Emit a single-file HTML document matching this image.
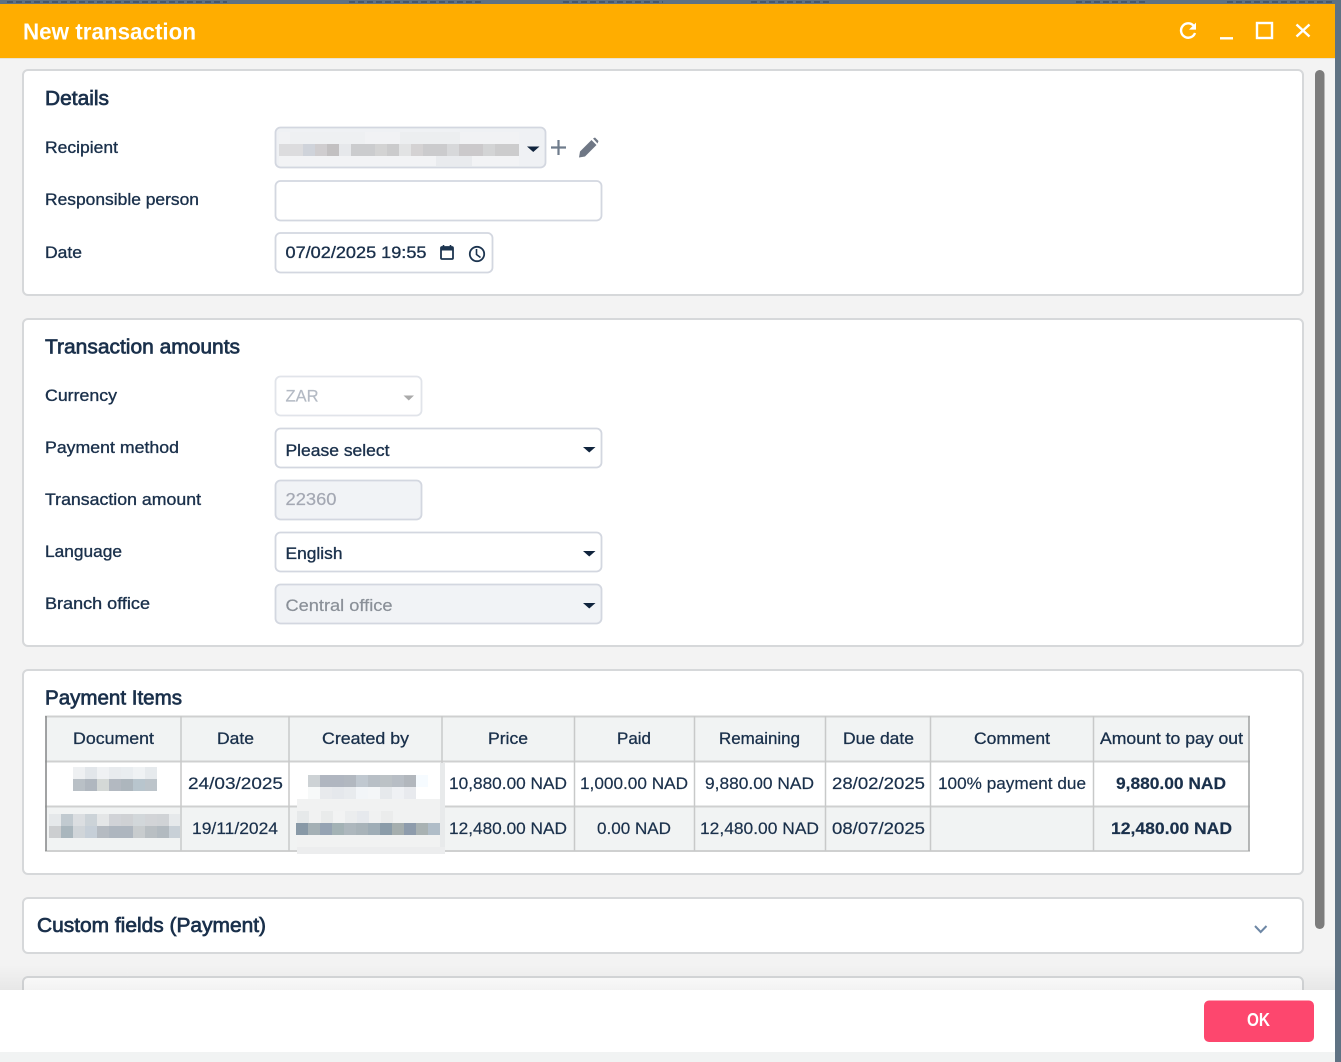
<!DOCTYPE html>
<html lang="en">
<head>
<meta charset="utf-8">
<title>New transaction</title>
<style>
html,body{margin:0;padding:0;background:#5f7283;width:1341px;height:1062px;overflow:hidden}
svg{display:block;position:absolute;left:0;top:0;filter:blur(.35px)}
text{font-family:"Liberation Sans",sans-serif;fill:#1a304b;font-size:17px;stroke:#1a304b;stroke-width:.2px}
.m{stroke:#1a304b;stroke-width:.35px}
.t{font-size:20px;stroke:#1a304b;stroke-width:.7px}
.th{font-size:17px;stroke:#1a304b;stroke-width:.3px}
.b{font-weight:bold;font-size:17px}
.card{fill:#fff;stroke:#d6d8da;stroke-width:2}
.in{fill:#fff;stroke:#d3d7e0;stroke-width:1.800}
.n{stroke:none}
</style>
</head>
<body>
<svg width="1341" height="1062" viewBox="0 0 1341 1062" xmlns="http://www.w3.org/2000/svg">
<defs>
<linearGradient id="fade" x1="0" y1="0" x2="0" y2="1"><stop offset="0" stop-color="#000" stop-opacity="0"/><stop offset="1" stop-color="#000" stop-opacity=".05"/></linearGradient>
</defs>

<!-- page behind -->
<rect x="0" y="0" width="1341" height="1062" fill="#5f7283"/>
<g stroke="#46576a" stroke-width="2" stroke-dasharray="6 3" fill="none">
<path d="M7 2H227M349 2H481M563 2H663M751 2H830M1076 2H1146M1227 2H1334"/>
</g>

<!-- modal -->
<rect x="0" y="4" width="1335" height="1048" fill="#f3f3f3"/>
<rect x="0" y="4" width="1335" height="54" fill="#ffad00"/>
<rect x="0" y="58" width="1335" height="1" fill="#e9e4d6"/>
<text class="n" x="23" y="39.500" textLength="173" lengthAdjust="spacingAndGlyphs" style="font-size:23px;font-weight:bold;fill:#fff;">New transaction</text>

<!-- header icons -->
<g fill="none" stroke="#fff" stroke-width="2.400">
<path d="M1193.500 25.600A7.200 7.200 0 1 0 1195 33"/>
<path d="M1196 22.600V29.600H1189Z" fill="#fff" stroke="none"/>
<path d="M1220 38.300H1233"/>
<rect x="1257" y="23" width="15" height="15"/>
<path d="M1296.500 24.500L1309.500 36.500M1309.500 24.500L1296.500 36.500"/>
</g>

<!-- scrollbar -->
<rect x="1315" y="70" width="9.500" height="859" rx="4.700" fill="#7c7c7c"/>

<!-- cards -->
<rect class="card" x="23" y="70" width="1280" height="225" rx="5"/>
<rect class="card" x="23" y="319" width="1280" height="327" rx="5"/>
<rect class="card" x="23" y="670" width="1280" height="204" rx="5"/>
<rect class="card" x="23" y="898" width="1280" height="55" rx="5"/>
<rect class="card" x="23" y="977" width="1280" height="40" rx="5"/>
<rect x="0" y="965" width="1335" height="25" fill="url(#fade)"/>

<!-- Details -->
<text class="t" x="45" y="105" textLength="64" lengthAdjust="spacingAndGlyphs">Details</text>
<text class="m" x="45" y="153" textLength="73" lengthAdjust="spacingAndGlyphs">Recipient</text>
<text class="m" x="45" y="205" textLength="154" lengthAdjust="spacingAndGlyphs">Responsible person</text>
<text class="m" x="45" y="258" textLength="37" lengthAdjust="spacingAndGlyphs">Date</text>

<rect class="in" x="275.500" y="127.500" width="270" height="40" rx="5" style="fill:#eff1f4"/>
<!-- recipient blur -->
<g>
<rect x="279" y="132" width="240" height="12" fill="#f1f2f4"/>
<rect x="290" y="132" width="75" height="12" fill="#eef0f2"/>
<rect x="400" y="132" width="60" height="12" fill="#eceef0"/>
<rect x="279" y="156" width="240" height="10" fill="#f2f3f5"/>
<rect x="436" y="156" width="36" height="10" fill="#e9ebee"/>
<rect x="279" y="144" width="24" height="12" fill="#dcdcde"/>
<rect x="303" y="144" width="12" height="12" fill="#cfd3da"/>
<rect x="315" y="144" width="12" height="12" fill="#cfcdcf"/>
<rect x="327" y="144" width="12" height="12" fill="#c2c0c1"/>
<rect x="339" y="144" width="12" height="12" fill="#e6e8eb"/>
<rect x="351" y="144" width="24" height="12" fill="#cbccce"/>
<rect x="375" y="144" width="12" height="12" fill="#d3d3d3"/>
<rect x="387" y="144" width="12" height="12" fill="#cbcbcc"/>
<rect x="399" y="144" width="12" height="12" fill="#e2e3e4"/>
<rect x="411" y="144" width="12" height="12" fill="#d4d2d3"/>
<rect x="423" y="144" width="24" height="12" fill="#cbcbcd"/>
<rect x="447" y="144" width="12" height="12" fill="#d7d8da"/>
<rect x="459" y="144" width="24" height="12" fill="#cbc9cb"/>
<rect x="483" y="144" width="12" height="12" fill="#d3d4d5"/>
<rect x="495" y="144" width="24" height="12" fill="#cccccd"/>
</g>
<path d="M527 146.500H539.500L533.250 152Z" fill="#10243d"/>
<path d="M558.500 140V155M551 147.500H566" stroke="#6f7c8c" stroke-width="2.200" fill="none"/>
<path d="M579 157.500L580 151.500L591.500 140L596.500 145L585 156.500Z M593 138.500L595 137.500L598.500 141L597.500 143.500Z" fill="#6f7785"/>

<rect class="in" x="275.500" y="181" width="326" height="39.500" rx="5"/>
<rect class="in" x="275.500" y="233" width="217" height="39.500" rx="5"/>
<text class="m" x="285.500" y="258" textLength="141" lengthAdjust="spacingAndGlyphs">07/02/2025 19:55</text>
<!-- calendar -->
<g fill="none" stroke="#1d3550">
<rect x="441" y="247" width="12" height="12" rx="1" stroke-width="1.800"/>
<rect x="441" y="246.500" width="12" height="4" fill="#1d3550" stroke="none"/>
<path d="M443.500 245V248M450.500 245V248" stroke-width="1.600"/>
<circle cx="477" cy="254" r="7.200" stroke-width="1.800"/>
<path d="M476.500 249V254.500L480.500 257.500" stroke-width="1.600"/>
</g>

<!-- Transaction amounts -->
<text class="t" x="45" y="353.500" textLength="195" lengthAdjust="spacingAndGlyphs">Transaction amounts</text>
<text class="m" x="45" y="401" textLength="72" lengthAdjust="spacingAndGlyphs">Currency</text>
<text class="m" x="45" y="453" textLength="134" lengthAdjust="spacingAndGlyphs">Payment method</text>
<text class="m" x="45" y="505" textLength="156" lengthAdjust="spacingAndGlyphs">Transaction amount</text>
<text class="m" x="45" y="557" textLength="77" lengthAdjust="spacingAndGlyphs">Language</text>
<text class="m" x="45" y="609" textLength="105" lengthAdjust="spacingAndGlyphs">Branch office</text>

<rect x="275.500" y="376.500" width="146" height="39" rx="5" fill="#fff" stroke="#e1e4ea" stroke-width="1.800"/>
<text x="285.500" y="401.500" textLength="33" lengthAdjust="spacingAndGlyphs" style="fill:#b4bac4;stroke:#b4bac4;font-size:17px">ZAR</text>
<path d="M403.500 395.500H414L408.750 400.500Z" fill="#aaaaaa"/>

<rect class="in" x="275.500" y="428.500" width="326" height="39" rx="5"/>
<text class="m" x="285.500" y="456" textLength="104" lengthAdjust="spacingAndGlyphs">Please select</text>
<path d="M583 447H595.500L589.250 452.500Z" fill="#10243d"/>

<rect class="in" x="275.500" y="480.500" width="146" height="39" rx="5" style="fill:#f1f3f6"/>
<text x="285.500" y="505" textLength="51" lengthAdjust="spacingAndGlyphs" style="fill:#a4a8b3;stroke:#a4a8b3;font-size:17.500px">22360</text>

<rect class="in" x="275.500" y="532.500" width="326" height="39" rx="5"/>
<text class="m" x="285.500" y="559" textLength="57" lengthAdjust="spacingAndGlyphs">English</text>
<path d="M583 551H595.500L589.250 556.500Z" fill="#10243d"/>

<rect class="in" x="275.500" y="584.500" width="326" height="39" rx="5" style="fill:#f1f3f6"/>
<text x="285.500" y="611" textLength="107" lengthAdjust="spacingAndGlyphs" style="fill:#8a9098;stroke:#8a9098">Central office</text>
<path d="M583 603H595.500L589.250 608.500Z" fill="#10243d"/>

<!-- Payment Items -->
<text class="t" x="45" y="704.500" textLength="137" lengthAdjust="spacingAndGlyphs">Payment Items</text>

<rect x="46" y="717" width="1203" height="44" fill="#f1f3f3"/>
<rect x="46" y="807" width="1203" height="44" fill="#f1f3f3"/>
<g stroke="#cfd0d0" stroke-width="2" fill="none">
<path d="M45 716.500H1250M45 761.500H1250M45 806.500H1250M45 851H1250"/>
</g>
<g stroke="#c8c9c9" stroke-width="1.500" fill="none">
<path d="M181 716V851M289 716V851M442 716V851M574.500 716V851M694.500 716V851M825.500 716V851M930.500 716V851M1093.500 716V851"/>
</g>
<path d="M46 716V851" stroke="#8a8c8d" stroke-width="1.600"/>
<path d="M1249 716V851" stroke="#a4a6a6" stroke-width="1.600"/>

<g>
<text class="th" x="73" y="744" textLength="81" lengthAdjust="spacingAndGlyphs">Document</text>
<text class="th" x="217" y="744" textLength="37" lengthAdjust="spacingAndGlyphs">Date</text>
<text class="th" x="322" y="744" textLength="87" lengthAdjust="spacingAndGlyphs">Created by</text>
<text class="th" x="488" y="744" textLength="40" lengthAdjust="spacingAndGlyphs">Price</text>
<text class="th" x="617" y="744" textLength="34" lengthAdjust="spacingAndGlyphs">Paid</text>
<text class="th" x="719" y="744" textLength="81" lengthAdjust="spacingAndGlyphs">Remaining</text>
<text class="th" x="843" y="744" textLength="71" lengthAdjust="spacingAndGlyphs">Due date</text>
<text class="th" x="974" y="744" textLength="76" lengthAdjust="spacingAndGlyphs">Comment</text>
<text class="th" x="1100" y="744" textLength="143" lengthAdjust="spacingAndGlyphs">Amount to pay out</text>

<text x="188" y="789" textLength="95" lengthAdjust="spacingAndGlyphs">24/03/2025</text>
<text x="449" y="789" textLength="118" lengthAdjust="spacingAndGlyphs">10,880.00 NAD</text>
<text x="580" y="789" textLength="108" lengthAdjust="spacingAndGlyphs">1,000.00 NAD</text>
<text x="705" y="789" textLength="109" lengthAdjust="spacingAndGlyphs">9,880.00 NAD</text>
<text x="832" y="789" textLength="93" lengthAdjust="spacingAndGlyphs">28/02/2025</text>
<text x="938" y="789" textLength="148" lengthAdjust="spacingAndGlyphs">100% payment due</text>
<text class="b" x="1116" y="789" textLength="110" lengthAdjust="spacingAndGlyphs">9,880.00 NAD</text>

<text x="192" y="834" textLength="86" lengthAdjust="spacingAndGlyphs">19/11/2024</text>
<text x="449" y="834" textLength="118" lengthAdjust="spacingAndGlyphs">12,480.00 NAD</text>
<text x="597" y="834" textLength="74" lengthAdjust="spacingAndGlyphs">0.00 NAD</text>
<text x="700" y="834" textLength="119" lengthAdjust="spacingAndGlyphs">12,480.00 NAD</text>
<text x="832" y="834" textLength="93" lengthAdjust="spacingAndGlyphs">08/07/2025</text>
<text class="b" x="1111" y="834" textLength="121" lengthAdjust="spacingAndGlyphs">12,480.00 NAD</text>
</g>

<!-- table blur: doc row 1 -->
<g>
<rect x="73" y="767" width="12" height="12" fill="#eef0f2"/><rect x="85" y="767" width="12" height="12" fill="#e2e6ea"/><rect x="97" y="767" width="12" height="12" fill="#eff1f3"/><rect x="109" y="767" width="12" height="12" fill="#e8ebee"/><rect x="121" y="767" width="12" height="12" fill="#e9edf0"/><rect x="133" y="767" width="12" height="12" fill="#eff2f4"/><rect x="145" y="767" width="12" height="12" fill="#e6eaed"/>
<rect x="73" y="779" width="12" height="12" fill="#b9c0c6"/><rect x="85" y="779" width="12" height="12" fill="#b0b7bf"/><rect x="97" y="779" width="12" height="12" fill="#d4d8d6"/><rect x="109" y="779" width="12" height="12" fill="#b3b9c1"/><rect x="121" y="779" width="12" height="12" fill="#adb6bd"/><rect x="133" y="779" width="12" height="12" fill="#b8c5cd"/><rect x="145" y="779" width="12" height="12" fill="#bcc4ca"/>
</g>
<!-- created row 1 -->
<g>
<rect x="308" y="775" width="12" height="12" fill="#cdd2d5"/><rect x="320" y="775" width="12" height="12" fill="#b0b6c0"/><rect x="332" y="775" width="12" height="12" fill="#b0b6c0"/><rect x="344" y="775" width="12" height="12" fill="#b2b8c0"/><rect x="356" y="775" width="12" height="12" fill="#c0c8d0"/><rect x="368" y="775" width="12" height="12" fill="#b8bfc6"/><rect x="380" y="775" width="12" height="12" fill="#bcc2c6"/><rect x="392" y="775" width="12" height="12" fill="#b8bec5"/><rect x="404" y="775" width="12" height="12" fill="#b2b7bd"/><rect x="416" y="775" width="12" height="12" fill="#f6fbff"/>
<rect x="308" y="787" width="12" height="12" fill="#f7f9f9"/><rect x="320" y="787" width="12" height="12" fill="#e8eaed"/><rect x="332" y="787" width="12" height="12" fill="#e5e8ec"/><rect x="344" y="787" width="12" height="12" fill="#e8ebee"/><rect x="356" y="787" width="12" height="12" fill="#f2f5f8"/><rect x="368" y="787" width="12" height="12" fill="#f4f6f8"/><rect x="380" y="787" width="12" height="12" fill="#e6e9ec"/><rect x="392" y="787" width="12" height="12" fill="#eff1f4"/><rect x="404" y="787" width="12" height="12" fill="#e8eaee"/>
</g>
<!-- created row 2 patch -->
<rect x="297" y="799" width="148" height="55" fill="#f1f2f2"/>
<rect x="440" y="763" width="5" height="91" fill="#e8eaeb"/>
<g>
<rect x="297" y="811" width="12" height="12" fill="#e6e9ea"/><rect x="309" y="811" width="12" height="12" fill="#f1f2f2"/><rect x="321" y="811" width="12" height="12" fill="#e9ebeb"/><rect x="333" y="811" width="12" height="12" fill="#f2f3f3"/><rect x="345" y="811" width="12" height="12" fill="#ebedee"/><rect x="357" y="811" width="12" height="12" fill="#e6e9ed"/><rect x="369" y="811" width="12" height="12" fill="#f0f1f1"/><rect x="381" y="811" width="12" height="12" fill="#ebecec"/>
<rect x="296" y="823" width="12" height="12" fill="#8899a7"/><rect x="308" y="823" width="12" height="12" fill="#a4b0b5"/><rect x="320" y="823" width="12" height="12" fill="#95a3b3"/><rect x="332" y="823" width="12" height="12" fill="#a3b2b5"/><rect x="344" y="823" width="12" height="12" fill="#adb7bd"/><rect x="356" y="823" width="12" height="12" fill="#a8b3b9"/><rect x="368" y="823" width="12" height="12" fill="#9fadb6"/><rect x="380" y="823" width="12" height="12" fill="#8b9ca9"/><rect x="392" y="823" width="12" height="12" fill="#a5aeae"/><rect x="404" y="823" width="12" height="12" fill="#8e9cac"/><rect x="416" y="823" width="12" height="12" fill="#a9b2b3"/><rect x="428" y="823" width="12" height="12" fill="#b0bdc8"/>
<rect x="297" y="847" width="148" height="7" fill="#ecedee"/>
</g>
<!-- doc row 2 -->
<g>
<rect x="49" y="814" width="12" height="12" fill="#e5e8ea"/><rect x="61" y="814" width="12" height="12" fill="#c1cad0"/><rect x="73" y="814" width="12" height="12" fill="#dbdee1"/><rect x="85" y="814" width="12" height="12" fill="#ccd3d8"/><rect x="97" y="814" width="12" height="12" fill="#e4e6e7"/><rect x="109" y="814" width="12" height="12" fill="#d1d3d7"/><rect x="121" y="814" width="12" height="12" fill="#cfd1d4"/><rect x="133" y="814" width="12" height="12" fill="#d2d7da"/><rect x="145" y="814" width="12" height="12" fill="#d2d4d7"/><rect x="157" y="814" width="12" height="12" fill="#d0d3d6"/><rect x="169" y="814" width="11" height="12" fill="#e6e9eb"/>
<rect x="49" y="826" width="12" height="12" fill="#ccced0"/><rect x="61" y="826" width="12" height="12" fill="#a9b6bd"/><rect x="73" y="826" width="12" height="12" fill="#d0d5d9"/><rect x="85" y="826" width="12" height="12" fill="#c6cfd8"/><rect x="97" y="826" width="12" height="12" fill="#b5bbc2"/><rect x="109" y="826" width="12" height="12" fill="#aeb6bf"/><rect x="121" y="826" width="12" height="12" fill="#aeb6bf"/><rect x="133" y="826" width="12" height="12" fill="#c8ccce"/><rect x="145" y="826" width="12" height="12" fill="#b9bfc3"/><rect x="157" y="826" width="12" height="12" fill="#b2bac0"/><rect x="169" y="826" width="11" height="12" fill="#c8d0d7"/>
</g>

<!-- Custom fields -->
<text x="37" y="932" textLength="229" lengthAdjust="spacingAndGlyphs" style="font-size:20px;stroke:#1a304b;stroke-width:.7px">Custom fields (Payment)</text>
<path d="M1255 926L1260.700 932L1266.500 926" fill="none" stroke="#6d87a5" stroke-width="2"/>

<!-- footer -->
<rect x="0" y="990" width="1335" height="62" fill="#ffffff"/>
<rect x="0" y="1052" width="1335" height="10" fill="#f1f3f3"/>
<rect x="1204" y="1000.500" width="110" height="41.500" rx="5" fill="#fd476e"/>
<text class="n" x="1247" y="1026" textLength="23" lengthAdjust="spacingAndGlyphs" style="font-size:18px;font-weight:bold;fill:#fff">OK</text>
</svg>
</body>
</html>
